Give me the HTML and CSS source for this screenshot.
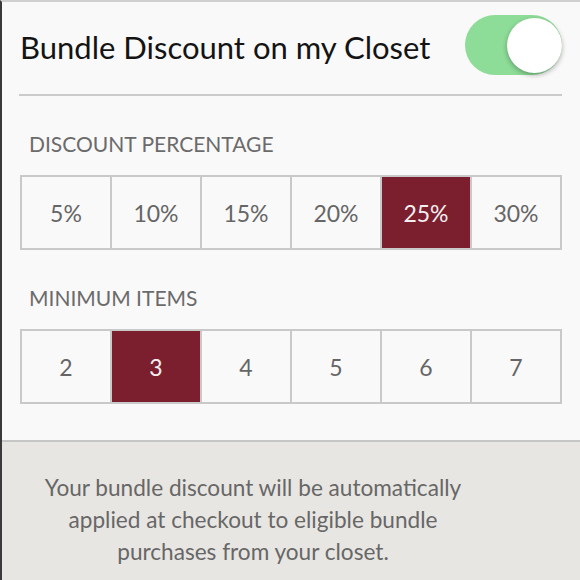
FILE: index.html
```html
<!DOCTYPE html>
<html lang="en">

<head>
    <meta charset="UTF-8">
    <title>Bundle Discount</title>
    <link rel="stylesheet" href="styles.css">
</head>

<body>

    <div class="screen">
        <div class="settings">
            <div class="header">
                <span class="title">Bundle Discount on my Closet</span>
                <div class="toggle on">
                    <div class="knob"></div>
                </div>
            </div>

            <div class="label">DISCOUNT PERCENTAGE</div>
            <div class="segments">
                <div class="segment">5%</div>
                <div class="segment">10%</div>
                <div class="segment">15%</div>
                <div class="segment">20%</div>
                <div class="segment selected">25%</div>
                <div class="segment">30%</div>
            </div>

            <div class="label">MINIMUM ITEMS</div>
            <div class="segments">
                <div class="segment">2</div>
                <div class="segment selected">3</div>
                <div class="segment">4</div>
                <div class="segment">5</div>
                <div class="segment">6</div>
                <div class="segment">7</div>
            </div>
        </div>

        <div class="note">
            Your bundle discount will be automatically<br>
            applied at checkout to eligible bundle<br>
            purchases from your closet.
        </div>
    </div>

</body>

</html>
```

FILE: styles.css
```css
body {
    margin: 0;
    padding: 0;
    font-family: 'Lato', 'Open Sans', sans-serif;
    background-color: #e8e6e2;
}

.screen {
    width: 578px;
    height: 578px;
    border-top: 2px solid #cfcfcf;
    border-left: 2px solid #3a3a3a;
    overflow: hidden;
}

.settings {
    background-color: #faf9f9;
    padding: 0 18px 36px 17px;
    border-bottom: 2px solid #c6c6c6;
}

.header {
    height: 94px;
    padding-bottom: 6px;
    box-sizing: border-box;
    border-bottom: 2px solid #cbcbcb;
    display: flex;
    align-items: center;
    justify-content: space-between;
}

.title {
    margin: 4px 0 0 1px;
    font-size: 31px;
    color: #141414;
}

.toggle {
    position: relative;
    width: 97px;
    height: 60px;
    border-radius: 30px;
    background-color: #e4e4e4;
}

.toggle.on {
    background-color: #8ddc97;
}

/* white thumb sits on the right when switched on */
.knob {
    position: absolute;
    top: 3px;
    right: 0;
    width: 55px;
    height: 55px;
    border-radius: 50%;
    background-color: #fff;
    box-shadow: 0 2px 5px rgba(0, 0, 0, 0.3);
}

.label {
    margin: 36px 0 19px 10px;
    font-size: 21px;
    color: #6b6b6b;
    line-height: 24px;
}

.segments {
    margin-left: 1px;
    display: grid;
    grid-template-columns: repeat(6, 1fr);
    gap: 2px;
    padding: 2px;
    background-color: #c9c9c9;
}

.segment {
    height: 71px;
    display: flex;
    align-items: center;
    justify-content: center;
    background-color: #faf9f9;
    font-size: 23px;
    color: #666;
}

.segment.selected {
    background-color: #7b1f2f;
    color: #f4eef0;
}

/* the app centres this copy slightly left of the screen middle */
.note {
    padding: 30px 76px 0 0;
    text-align: center;
    font-size: 22.6px;
    line-height: 32px;
    color: #676767;
}
```
